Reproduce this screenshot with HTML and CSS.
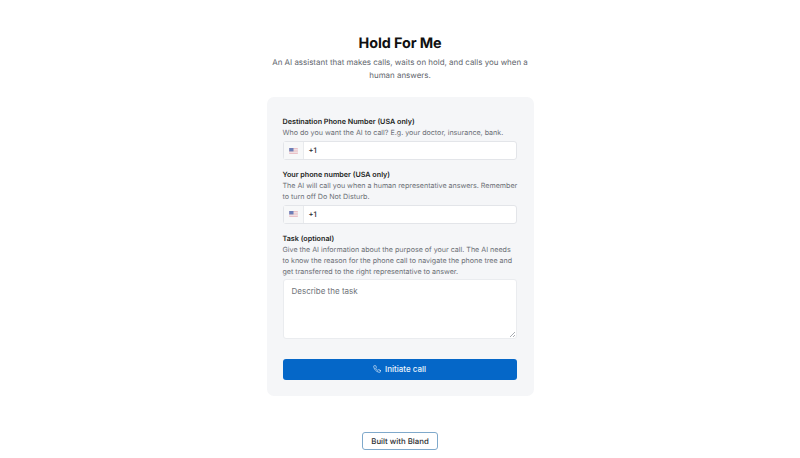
FILE: index.html
```html
<!DOCTYPE html>
<html lang="en">
<head>
<meta charset="utf-8">
<title>Hold For Me</title>
<link rel="stylesheet" href="styles.css">
</head>
<body>
<main class="page">
  <h1 class="title">Hold For Me</h1>
  <p class="intro">An AI assistant that makes calls, waits on hold, and calls you when a human answers.</p>
  <form class="card">
    <div class="field">
      <label class="label">Destination Phone Number (USA only)</label>
      <p class="hint">Who do you want the AI to call? E.g. your doctor, insurance, bank.</p>
      <div class="phone">
        <span class="flag-box"><svg class="flag" viewBox="0 0 10 7"><rect width="10" height="7" fill="#e8b9c0"/><rect y="1" width="10" height="1" fill="#f4f0f2"/><rect y="3" width="10" height="1" fill="#f4f0f2"/><rect y="5" width="10" height="1" fill="#f4f0f2"/><rect width="5" height="4" fill="#6d7fb8"/></svg></span>
        <span class="code">+1</span>
      </div>
    </div>
    <div class="field next">
      <label class="label">Your phone number (USA only)</label>
      <p class="hint">The AI will call you when a human representative answers. Remember to turn off Do Not Disturb.</p>
      <div class="phone">
        <span class="flag-box"><svg class="flag" viewBox="0 0 10 7"><rect width="10" height="7" fill="#e8b9c0"/><rect y="1" width="10" height="1" fill="#f4f0f2"/><rect y="3" width="10" height="1" fill="#f4f0f2"/><rect y="5" width="10" height="1" fill="#f4f0f2"/><rect width="5" height="4" fill="#6d7fb8"/></svg></span>
        <span class="code">+1</span>
      </div>
    </div>
    <div class="field last">
      <label class="label">Task (optional)</label>
      <p class="hint">Give the AI information about the purpose of your call. The AI needs to know the reason for the phone call to navigate the phone tree and get transferred to the right representative to answer.</p>
      <textarea class="task" placeholder="Describe the task"></textarea>
    </div>
    <button class="submit" type="button">
      <svg class="phone-icon" viewBox="0 0 24 24" fill="none" stroke="currentColor" stroke-width="2" stroke-linecap="round" stroke-linejoin="round"><path d="M22 16.9v3a2 2 0 0 1-2.2 2 19.8 19.8 0 0 1-8.6-3.1 19.5 19.5 0 0 1-6-6A19.8 19.8 0 0 1 2.1 4.2 2 2 0 0 1 4.1 2h3a2 2 0 0 1 2 1.7c.1 1 .4 1.9.7 2.8a2 2 0 0 1-.5 2.1L8.1 9.9a16 16 0 0 0 6 6l1.3-1.3a2 2 0 0 1 2.1-.4c.9.3 1.8.6 2.8.7a2 2 0 0 1 1.7 2z"/></svg>
      Initiate call
    </button>
  </form>
  <a class="built" href="#">Built with Bland</a>
</main>
</body>
</html>
```
FILE: styles.css
```css
* { box-sizing: border-box; }
html, body { margin: 0; height: 100%; background: #fff; }
body { font-family: Inter, "Liberation Sans", sans-serif; color: #111; overflow: hidden; text-rendering: geometricPrecision; }
.page { display: flex; flex-direction: column; align-items: center; padding-top: 34px; }
.title { margin: 0; font-size: 14.4px; line-height: 20px; font-weight: 700; letter-spacing: -0.1px; color: #111; }
.intro { margin: 2px 0 0; width: 262px; font-size: 7.95px; line-height: 13px; text-align: center; color: #62666d; }
.card { margin-top: 15px; width: 267px; height: 299px; padding: 19px 17px 0 16px; background: #f5f6f8; border-radius: 7px; display: flex; flex-direction: column; }
.field { display: flex; flex-direction: column; }
.next { margin-top: 8.5px; }
.last { margin-top: 9px; }
.label { font-size: 7.2px; line-height: 11px; font-weight: 600; color: #1b1d21; }
.hint { margin: 0 -2px 0 0; font-size: 7.12px; line-height: 11px; color: #6b6f76; }
.phone { margin-top: 3px; height: 19px; display: flex; align-items: center; background: #fff; border: 1px solid #e3e5e9; border-radius: 3px; }
.flag-box { width: 20px; height: 100%; display: flex; align-items: center; justify-content: center; background: #f7f8f9; border-right: 1px solid #e8eaed; }
.flag { width: 9px; height: 6px; display: block; }
.code { margin-left: 5px; font-size: 7.5px; font-weight: 500; color: #2b2d31; }
.task { margin-top: 2px; height: 60px; width: 100%; padding: 5px 8px; background: #fff; border: 1px solid #eaecef; border-radius: 3px; font-family: inherit; font-size: 8px; line-height: 12px; display: block; outline: none; }
.task::placeholder { color: #6f7379; opacity: 1; }
.task::-webkit-resizer { background: linear-gradient(135deg, transparent 50%, #a9adb3 50%, #a9adb3 62%, transparent 62%, transparent 76%, #a9adb3 76%, #a9adb3 88%, transparent 88%) no-repeat right 1px bottom 1px / 6px 6px; }
.submit { flex: none; margin-top: 20px; height: 21px; width: 100%; display: flex; align-items: center; justify-content: center; gap: 4px; background: #0567c8; color: #eaf3fc; border: 0; border-radius: 3px; font-family: inherit; font-size: 8px; font-weight: 500; padding: 0; }
.phone-icon { width: 8px; height: 8px; display: block; }
.built { margin-top: 36px; width: 76px; height: 18px; display: flex; align-items: center; justify-content: center; background: #fff; border: 1px solid #7fa9cb; border-radius: 3px; font-size: 7.8px; font-weight: 500; color: #2a2c30; text-decoration: none; }
```
